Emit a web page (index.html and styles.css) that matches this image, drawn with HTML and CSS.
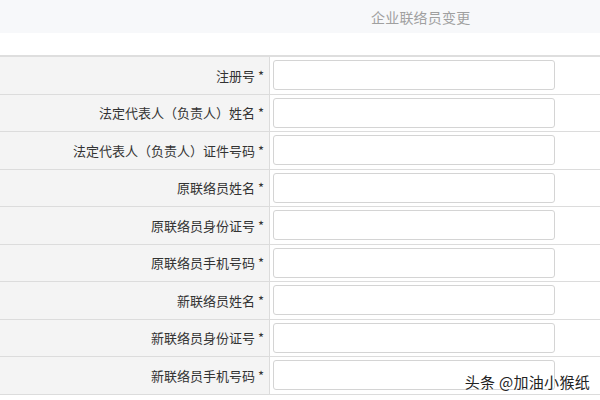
FILE: index.html
```html
<!DOCTYPE html>
<html lang="zh-CN">
<head>
<meta charset="utf-8">
<title>企业联络员变更</title>
<link rel="stylesheet" href="styles.css">
</head>
<body>
<div class="page">
  <div class="header"><span class="title">企业联络员变更</span></div>
  <div class="form">
    <div class="row"><div class="label">注册号 *</div><div class="field"><input class="input" type="text"></div></div>
    <div class="row"><div class="label">法定代表人（负责人）姓名 *</div><div class="field"><input class="input" type="text"></div></div>
    <div class="row"><div class="label">法定代表人（负责人）证件号码 *</div><div class="field"><input class="input" type="text"></div></div>
    <div class="row"><div class="label">原联络员姓名 *</div><div class="field"><input class="input" type="text"></div></div>
    <div class="row"><div class="label">原联络员身份证号 *</div><div class="field"><input class="input" type="text"></div></div>
    <div class="row"><div class="label">原联络员手机号码 *</div><div class="field"><input class="input" type="text"></div></div>
    <div class="row"><div class="label">新联络员姓名 *</div><div class="field"><input class="input" type="text"></div></div>
    <div class="row"><div class="label">新联络员身份证号 *</div><div class="field"><input class="input" type="text"></div></div>
    <div class="row"><div class="label">新联络员手机号码 *</div><div class="field"><input class="input" type="text"></div></div>
  </div>
  <div class="watermark">头条 @加油小猴纸</div>
</div>
</body>
</html>
```

FILE: styles.css
```css
html, body {
  margin: 0;
  padding: 0;
  background: #ffffff;
  font-family: "Microsoft YaHei", "Noto Sans CJK SC", "Noto Sans", sans-serif;
  color: #333;
}
.page {
  position: relative;
  width: 600px;
  height: 400px;
  overflow: hidden;
}
.header {
  height: 33px;
  background: #f7f8fa;
  display: flex;
  align-items: center;
  padding-left: 371px;
  box-sizing: border-box;
}
.title {
  font-size: 14px;
  color: #a0a0a0;
  letter-spacing: 0.2px;
}
.form {
  margin-top: 22px;
  border-top: 2px solid #dedede;
}
.row {
  display: grid;
  grid-template-columns: 270px 1fr;
  height: 37.5px;
  box-sizing: border-box;
  border-bottom: 1px solid #dcdcdc;
}
.label {
  background: #f4f4f4;
  border-right: 1px solid #dcdcdc;
  display: flex;
  align-items: center;
  justify-content: flex-end;
  padding-right: 5px;
  font-size: 13px;
  color: #333;
  white-space: nowrap;
}
.field {
  display: flex;
  align-items: center;
  padding-left: 3px;
}
.input {
  width: 282px;
  height: 30px;
  box-sizing: border-box;
  border: 1px solid #d4d4d4;
  border-radius: 3px;
  background: #fff;
  margin: 0;
  padding: 0 6px;
  outline: none;
}
.watermark {
  position: absolute;
  right: 10px;
  bottom: 8px;
  font-size: 15px;
  color: #222;
  text-shadow: 0 0 2px #fff, 0 0 2px #fff;
  letter-spacing: 0.3px;
}
```
